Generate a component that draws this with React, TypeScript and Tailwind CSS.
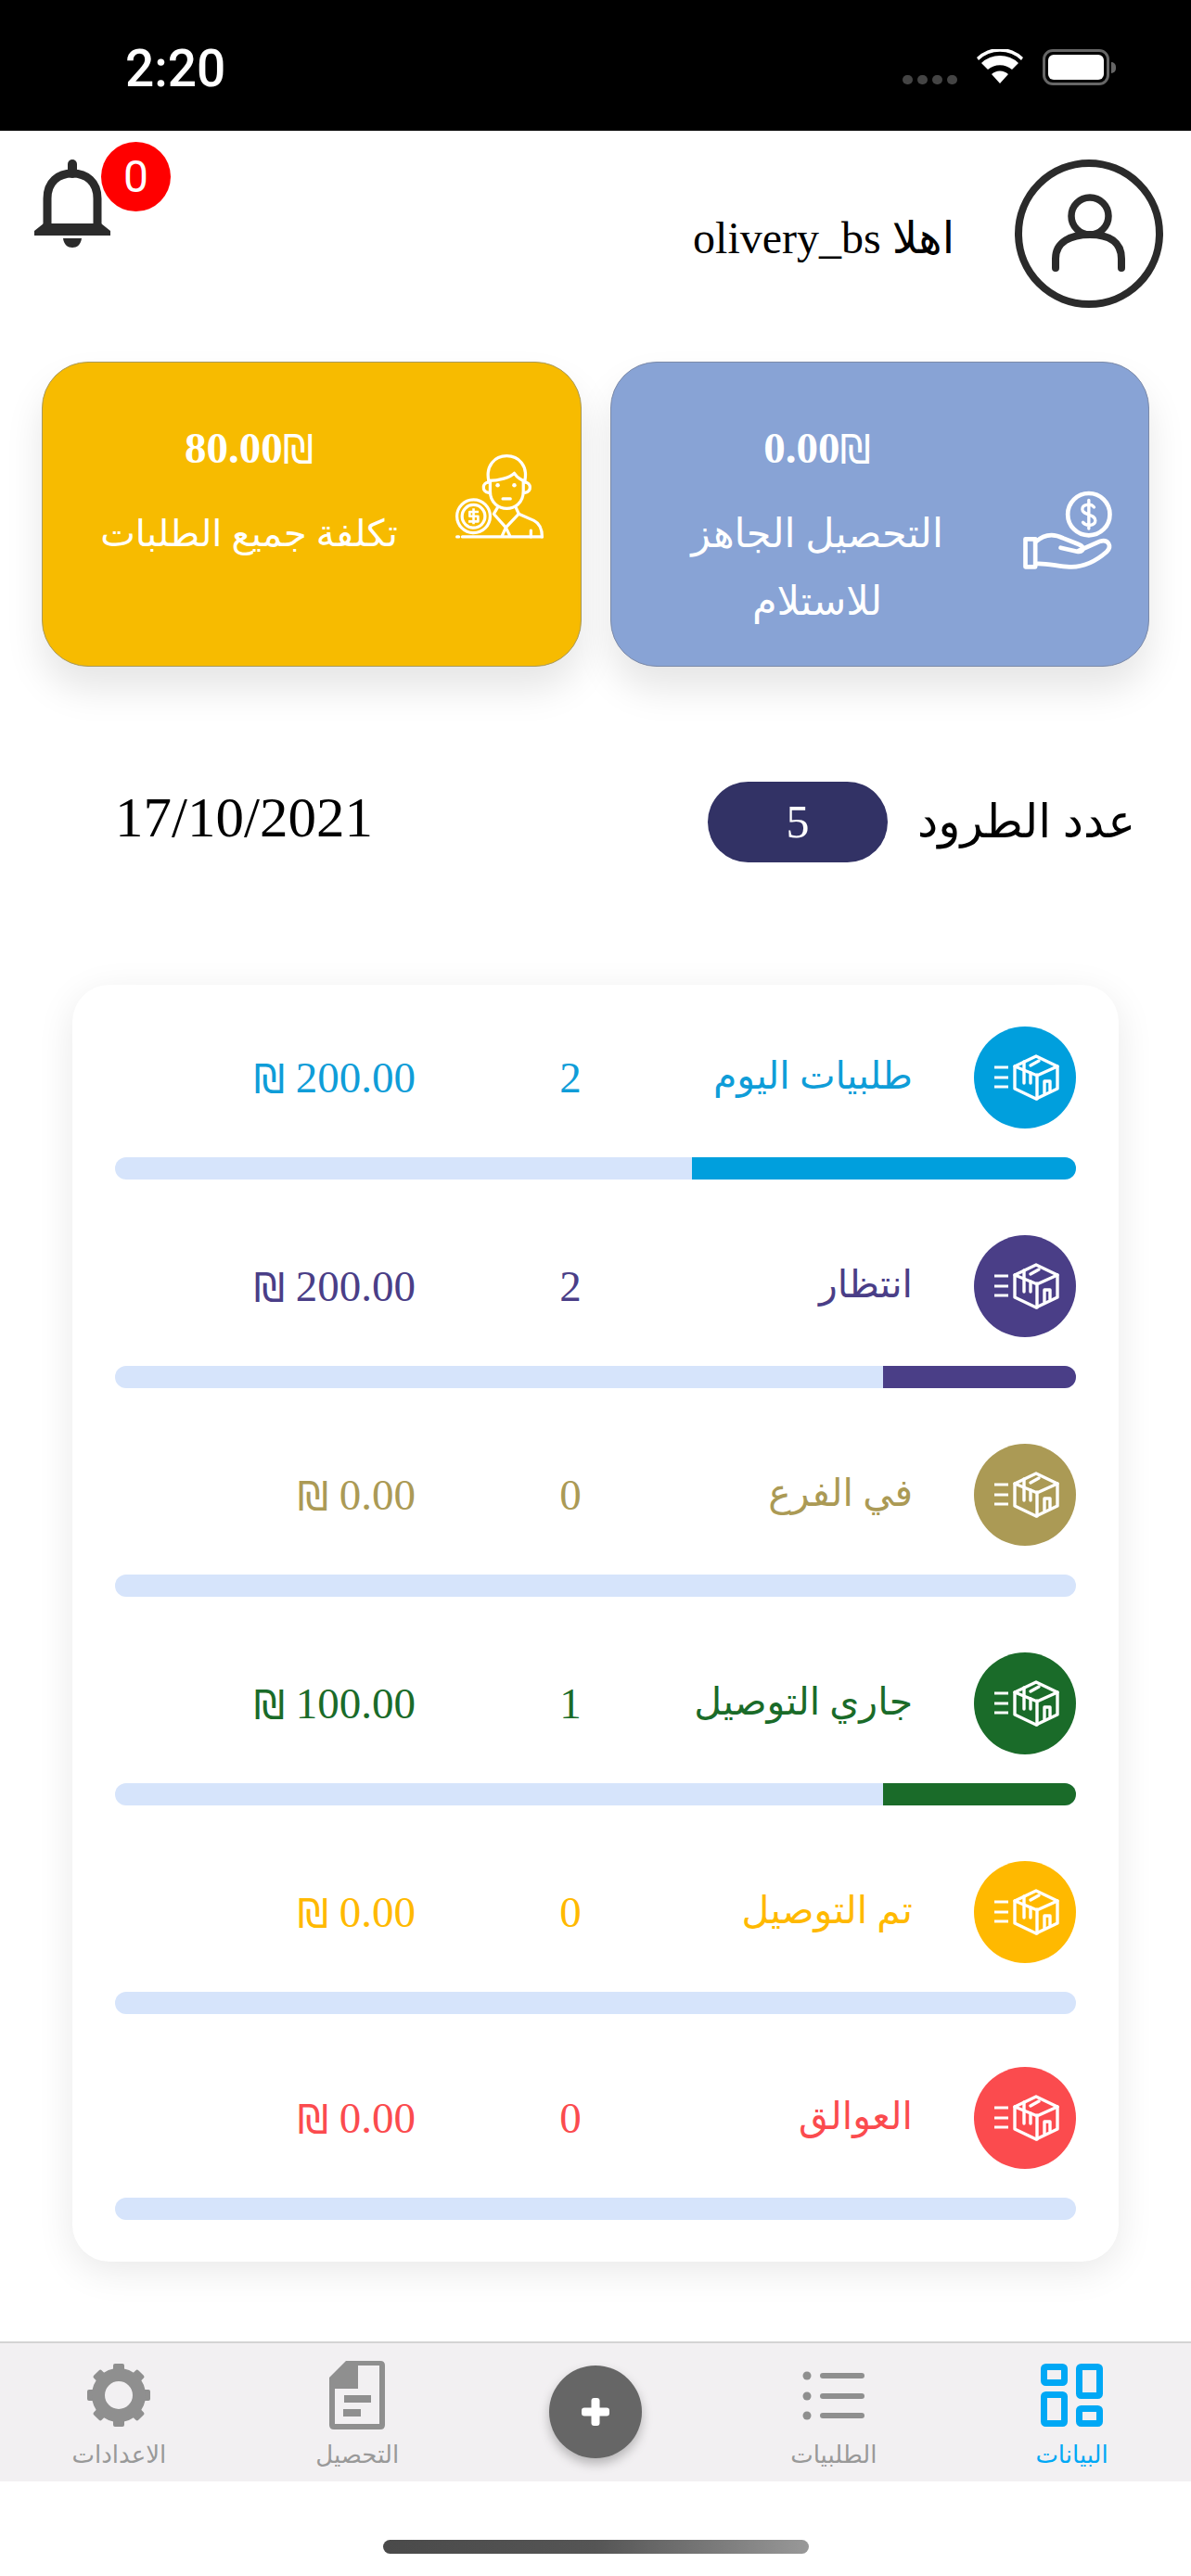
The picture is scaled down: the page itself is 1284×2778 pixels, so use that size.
const rows = [
  { label: "طلبيات اليوم", count: 2, amount: "200.00", fill: 414, text: "text-[#0f9dd8]", bg: "bg-[#009fdd]" },
  { label: "انتظار", count: 2, amount: "200.00", fill: 208, text: "text-[#4a3e87]", bg: "bg-[#4a3e87]" },
  { label: "في الفرع", count: 0, amount: "0.00", fill: 0, text: "text-[#ab9a55]", bg: "bg-[#ab9a55]" },
  { label: "جاري التوصيل", count: 1, amount: "100.00", fill: 208, text: "text-[#1a6b29]", bg: "bg-[#1a6b29]" },
  { label: "تم التوصيل", count: 0, amount: "0.00", fill: 0, text: "text-[#ffb900]", bg: "bg-[#ffb900]" },
  { label: "العوالق", count: 0, amount: "0.00", fill: 0, text: "text-[#fb4b4e]", bg: "bg-[#fb4b4e]" },
];

const BoxIcon = () => (
  <svg viewBox="0 0 110 110" className="w-[110px] h-[110px]" fill="none" stroke="white" strokeWidth="3.4" strokeLinejoin="round" strokeLinecap="round">
    <path d="M67 32 90 43V67L67 78 44 67V43Z" />
    <path d="M44 43 66 52M90 43 70 52M68 52V78" />
    <path d="M54 38V61M61 50V61M61 42 70 37" />
    <path d="M76 72V59H82V69" />
    <path d="M22 44H37M22 55H37M22 65H37" strokeWidth="3.2" strokeLinecap="butt" />
  </svg>
);

const PersonCoin = () => (
  <svg viewBox="95 50 295 285" className="w-[96px] h-[93px] mt-[98px]" fill="none" stroke="white" strokeWidth="10" strokeLinecap="round" strokeLinejoin="round">
    <path d="M205 140C195 90 225 58 265 58 305 58 335 90 325 140" />
    <path d="M205 140C240 140 275 130 290 115 300 130 315 140 325 140" />
    <path d="M210 140V175C210 215 240 232 265 232 290 232 320 215 320 175V140" />
    <path d="M205 145C185 145 180 175 205 180M325 145C345 145 350 175 325 180" />
    <circle cx="235" cy="155" r="7" fill="white" stroke="none" />
    <circle cx="290" cy="155" r="7" fill="white" stroke="none" />
    <path d="M252 200H277" />
    <path d="M235 228 222 250 262 295 305 250 295 228M262 295 250 322M262 295 275 322" />
    <path d="M305 250 355 272C375 282 382 300 382 326M345 305V326" />
    <path d="M118 326H382M100 326H106" />
    <circle cx="155" cy="258" r="55" />
    <circle cx="155" cy="258" r="38" />
    <path d="M172 243H142V258H170V275H138M155 232V284" strokeWidth="8" strokeLinecap="butt" />
  </svg>
);

const HandCoin = () => (
  <svg viewBox="65 -15 305 270" className="w-[102px] h-[90px] mt-[136px] -ml-[3px]" fill="none" stroke="white" strokeWidth="14" strokeLinecap="round" strokeLinejoin="round">
    <circle cx="283" cy="68" r="68" />
    <path d="M300 45C290 32 262 34 262 52 262 72 304 66 304 88 304 106 274 108 264 94M283 22V114" strokeWidth="10" />
    <path d="M78 148H110V238H78Z" />
    <path d="M110 158C140 130 170 130 200 145L250 165C270 172 268 192 245 188L192 176" />
    <path d="M250 186 320 155C345 148 360 170 340 190 300 225 260 240 220 238 180 235 140 225 110 228" />
  </svg>
);

const GearIcon = () => (
  <svg viewBox="0 0 68 68" className="w-[68px] h-[68px]">
    {[0, 45, 90, 135, 180, 225, 270, 315].map((a) => (
      <rect key={a} x="28" y="0" width="12" height="14" rx="2" fill="#8f8f8f" transform={`rotate(${a} 34 34)`} />
    ))}
    <circle cx="34" cy="34" r="22" fill="none" stroke="#8f8f8f" strokeWidth="14" />
  </svg>
);

const DocIcon = () => (
  <svg viewBox="0 0 60 76" className="w-[60px] h-[76px]">
    <path d="M18 1H55Q60 1 60 6V70Q60 75 55 75H5Q0 75 0 70V19Z" fill="#8f8f8f" />
    <path d="M31 6H54V69H6V31H31Z" fill="#f2f0f2" />
    <rect x="16" y="38" width="29" height="8" fill="#8f8f8f" />
    <rect x="15" y="53" width="19" height="8" fill="#8f8f8f" />
  </svg>
);

const ListIcon = () => (
  <svg viewBox="0 0 67 53" className="w-[67px] h-[53px]" fill="#8f8f8f">
    {[5, 27, 48].map((y) => (
      <g key={y}>
        <circle cx="5" cy={y} r="4.5" />
        <rect x="19" y={y - 3} width="48" height="6" rx="3" />
      </g>
    ))}
  </svg>
);

const GridIcon = () => (
  <svg viewBox="0 0 67 68" className="w-[67px] h-[68px]" fill="none" stroke="#00a8f5" strokeWidth="7">
    <rect x="3.5" y="3.5" width="22" height="17" rx="2" />
    <rect x="41.5" y="3.5" width="22" height="31" rx="2" />
    <rect x="3.5" y="33.5" width="22" height="31" rx="2" />
    <rect x="41.5" y="48.5" width="22" height="16" rx="2" />
  </svg>
);

const Bell = () => (
  <svg viewBox="0 0 82 95" className="w-[82px] h-[95px]" fill="#2b2b2b">
    <rect x="36" y="0" width="10" height="20" rx="5" />
    <path d="M14 72V42C14 24 26 15 41 15 56 15 68 24 68 42V72" fill="none" stroke="#2b2b2b" strokeWidth="9" />
    <path d="M10 69H72L82 77V82H0V77Z" />
    <path d="M31 85H51C50 92 46 95 41 95 36 95 32 92 31 85Z" />
  </svg>
);

const Avatar = () => (
  <svg viewBox="0 0 160 162" className="w-[160px] h-[162px]" fill="none" stroke="#2b2b2b" strokeLinecap="round">
    <circle cx="80" cy="81" r="76" strokeWidth="8" />
    <circle cx="81" cy="62" r="20" strokeWidth="7.5" />
    <path d="M44 118V108C44 90 60 82 81 82 102 82 115 90 115 108V118" strokeWidth="8" />
  </svg>
);

const tabs = [
  { label: "الاعدادات", icon: <GearIcon /> },
  { label: "التحصيل", icon: <DocIcon /> },
  { label: "", icon: null },
  { label: "الطلبيات", icon: <ListIcon /> },
  { label: "البيانات", icon: <GridIcon />, active: true },
];

const Shekel = () => <span className="font-['DejaVu_Sans',sans-serif] font-normal text-[0.9em]">₪</span>;

export default function App() {
  return (
    <div className="w-[1284px] h-[2778px] flex flex-col bg-white overflow-hidden font-['Liberation_Serif','DejaVu_Sans',serif]">
      {/* status bar */}
      <div className="h-[141px] bg-black flex items-start justify-between pl-[135px] pr-[81px] pt-[45px] shrink-0">
        <span className="text-white text-[55px] leading-[58px] font-medium font-['Roboto',sans-serif]">2:20</span>
        <div className="flex items-start gap-[21px] pt-[8px]">
          <div className="flex gap-[5px] mt-[28px]">
            {[0, 1, 2, 3].map((i) => (
              <span key={i} className="w-[11px] h-[10px] rounded-full bg-[#444]" />
            ))}
          </div>
          <svg viewBox="0 0 50 37" className="w-[50px] h-[37px]" fill="white">
            <path d="M25 37 16 27A13 13 0 0 1 34 27ZM12 22 5 15A29 29 0 0 1 45 15L38 22A20 20 0 0 0 12 22ZM2 12 0 9A36 36 0 0 1 50 9L48 12A33 33 0 0 0 2 12Z" />
          </svg>
          <div className="flex items-center">
            <div className="w-[72px] h-[39px] rounded-[11px] border-[3px] border-[#666] p-[3px]">
              <div className="w-full h-full rounded-[6px] bg-white" />
            </div>
            <div className="w-[5px] h-[12px] rounded-r-full bg-[#666] ml-[2px]" />
          </div>
        </div>
      </div>

      {/* header */}
      <div className="flex justify-between pl-[37px] pr-[30px] h-[192px] shrink-0">
        <div className="relative mt-[31px] h-[95px]">
          <Bell />
          <div className="absolute left-[72px] top-[-19px] w-[75px] h-[75px] rounded-full bg-[#ff0000] flex items-center justify-center text-white text-[48px] font-['Roboto',sans-serif]">
            0
          </div>
        </div>
        <div className="flex items-start gap-[65px] pt-[30px]">
          <span dir="rtl" className="text-black text-[48px] leading-[60px] mt-[56px]">
            اهلا olivery_bs
          </span>
          <Avatar />
        </div>
      </div>

      {/* summary cards */}
      <div className="flex gap-[31px] pl-[45px] pr-[45px] mt-[57px] shrink-0">
        <div className="w-[582px] h-[329px] rounded-[50px] bg-[#f7bb00] border border-[#a89a5e] shadow-[0_24px_40px_rgba(0,0,0,0.1)] flex">
          <div className="w-[445px] pt-[62px] text-center text-white">
            <div dir="ltr" className="text-[47px] leading-[60px] font-bold">80.00<Shekel /></div>
            <div className="mt-[24px] text-[40px] leading-[73px]" dir="rtl">تكلفة جميع الطلبات</div>
          </div>
          <PersonCoin />
        </div>
        <div className="w-[582px] h-[329px] rounded-[50px] bg-[#88a3d5] border border-[#7c8aa8] shadow-[0_24px_40px_rgba(0,0,0,0.1)] flex">
          <div className="w-[445px] pt-[62px] text-center text-white">
            <div dir="ltr" className="text-[47px] leading-[60px] font-bold">0.00<Shekel /></div>
            <div className="mt-[24px] text-[43px] leading-[73px] px-[60px]" dir="rtl">التحصيل الجاهز للاستلام</div>
          </div>
          <HandCoin />
        </div>
      </div>

      {/* date + parcels */}
      <div className="flex items-center justify-between pl-[124px] pr-[60px] mt-[124px] h-[87px] shrink-0">
        <span className="text-[61px] leading-none text-black -mt-[10px]">17/10/2021</span>
        <div className="flex items-center gap-[32px]">
          <div className="w-[194px] h-[87px] rounded-full bg-[#323265] text-white text-[50px] flex items-center justify-center">5</div>
          <span dir="rtl" className="text-[50px] text-black">عدد الطرود</span>
        </div>
      </div>

      {/* stats */}
      <div dir="rtl" className="mx-[78px] w-[1128px] mt-[132px] h-[1377px] bg-white rounded-[40px] shadow-[0_10px_40px_rgba(0,0,0,0.09)] px-[46px] pt-[45px] flex flex-col gap-[60px] shrink-0">
        {rows.map((r, i) => (
          <div key={r.label} className={`shrink-0 ${r.text} ${i === 5 ? "-mt-[3px]" : ""}`}>
            <div className="flex items-center h-[110px]">
              <div className={`w-[110px] h-[110px] rounded-full shrink-0 ${r.bg}`}>
                <BoxIcon />
              </div>
              <span className="w-[323px] mr-[66px] text-[41px] -mt-[2px]">{r.label}</span>
              <span className="w-[92px] text-center text-[47px]">{r.count}</span>
              <span dir="ltr" className="mr-[121px] text-[47px]"><Shekel /> {r.amount}</span>
            </div>
            <div className="mt-[31px] h-[24px] rounded-full bg-[#d6e4fb] overflow-hidden">
              <div className={`h-full ${r.bg}`} style={{ width: r.fill }} />
            </div>
          </div>
        ))}
      </div>

      {/* tab bar */}
      <div className="mt-[86px] h-[151px] bg-[#f2f0f2] border-t-2 border-[#d4d4d4] grid grid-cols-5 shrink-0">
        {tabs.map((t, i) =>
          t.icon ? (
            <div key={t.label} className="flex flex-col items-center pt-[18px]">
              <div className="h-[76px] flex items-center justify-center">{t.icon}</div>
              <span dir="rtl" className={`mt-[9px] text-[26px] leading-[36px] ${t.active ? "text-[#00a8f5]" : "text-[#999]"}`}>{t.label}</span>
            </div>
          ) : (
            <div key={i} className="flex justify-center pt-[24px]">
              <div className="w-[100px] h-[100px] rounded-full bg-[#666] shadow-[0_6px_12px_rgba(0,0,0,0.25)] flex items-center justify-center">
                <svg viewBox="0 0 30 30" className="w-[30px] h-[30px]" fill="white">
                  <rect x="10.5" y="0" width="9" height="30" rx="3" />
                  <rect x="0" y="10.5" width="30" height="9" rx="3" />
                </svg>
              </div>
            </div>
          )
        )}
      </div>

      {/* home indicator */}
      <div className="flex-1 flex justify-center pt-[63px]">
        <div className="w-[459px] h-[15px] rounded-full bg-linear-to-r from-[#4a4a4a] via-[#555] to-[#999]" />
      </div>
    </div>
  );
}
